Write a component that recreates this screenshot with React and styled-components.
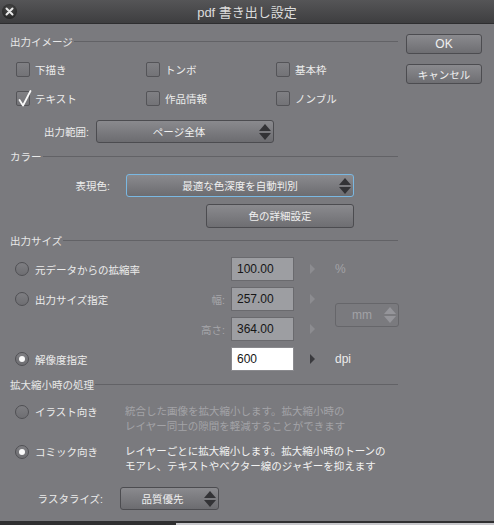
import React from 'react'
import styled, { createGlobalStyle, css } from 'styled-components'

const FONT = `"Liberation Sans", "Noto Sans CJK JP", sans-serif`

const GlobalStyle = createGlobalStyle`
  html, body {
    margin: 0;
    padding: 0;
    background: #7a7a7e;
  }
  body {
    font-family: ${FONT};
    font-size: 10.5px;
    color: #ececec;
  }
`

const Window = styled.div`
  width: 494px;
  height: 525px;
  display: flex;
  flex-direction: column;
  overflow: hidden;
  background: #7a7a7e;
`

const TitleBar = styled.div`
  height: 24px;
  flex: none;
  display: grid;
  grid-template-columns: 20px 1fr 20px;
  align-items: center;
  background: linear-gradient(#555557, #3e3e40);
  border-bottom: 1px solid #2e2e30;
  box-sizing: border-box;
`

const CloseButton = styled.div`
  width: 15px;
  height: 15px;
  margin-left: 2px;
  border-radius: 50%;
  background: radial-gradient(circle at 50% 35%, #4a4a4a, #1c1c1c);
  display: flex;
  align-items: center;
  justify-content: center;
`

const Title = styled.div`
  text-align: center;
  font-size: 13px;
  color: #dcdcdc;
`

const Body = styled.div`
  flex: 1;
  display: flex;
  gap: 8px;
  padding: 0 12px 0 10px;
`

const Main = styled.div`
  width: 388px;
  display: flex;
  flex-direction: column;
`

const Side = styled.div`
  width: 76px;
  padding-top: 10px;
  display: flex;
  flex-direction: column;
  gap: 10px;
`

const SectionHead = styled.div`
  height: 16px;
  margin-top: ${p => p.$mt}px;
  display: flex;
  align-items: center;
  gap: 1px;
  color: #e8e8e8;

  &::after {
    content: '';
    flex: 1;
    height: 1px;
    background: #626266;
  }
`

const CheckGrid = styled.div`
  margin-top: 6px;
  padding-left: 6px;
  display: grid;
  grid-template-columns: 130px 130px 130px;
  grid-auto-rows: 29px;
`

const CheckItem = styled.label`
  display: flex;
  align-items: center;
  gap: 5px;
`

const Box = styled.span`
  position: relative;
  width: 14px;
  height: 15px;
  box-sizing: border-box;
  border: 1px solid #545458;
  border-radius: 2px;
  background: linear-gradient(#808084, #737377);

  svg {
    position: absolute;
    left: 0px;
    top: -3px;
  }
`

const Row = styled.div`
  height: ${p => p.$h || 23}px;
  margin-top: ${p => p.$mt}px;
  display: flex;
  align-items: center;
  gap: ${p => p.$gap || 7}px;
  padding-left: ${p => p.$pl || 0}px;
`

const FieldLabel = styled.span`
  width: ${p => p.$w}px;
  text-align: right;
  flex: none;
`

const SelectBox = styled.div`
  position: relative;
  width: ${p => p.$w}px;
  height: ${p => p.$h || 23}px;
  box-sizing: border-box;
  border: 1px solid ${p => (p.$focus ? '#7ab8e2' : '#4c4c50')};
  border-radius: 3px;
  background: ${p => (p.$disabled ? '#7a7a7e' : 'linear-gradient(#8a8a8e, #6c6c70)')};
  color: ${p => (p.$disabled ? '#a2a2a6' : '#f0f0f0')};
  display: flex;
  align-items: center;
  justify-content: center;
  padding-right: ${p => p.$pr || 0}px;
  flex: none;
  ${p => p.$disabled && css`
    border-color: #66666a;
  `}
`

const Stepper = styled.span`
  position: absolute;
  right: 2px;
  top: 50%;
  transform: translateY(-50%);
  display: flex;
  flex-direction: column;
  gap: 2px;

  &::before, &::after {
    content: '';
    width: 0;
    height: 0;
    border-left: 6px solid transparent;
    border-right: 6px solid transparent;
  }
  &::before {
    border-bottom: 7px solid ${p => (p.$disabled ? '#95959a' : '#333336')};
  }
  &::after {
    border-top: 7px solid ${p => (p.$disabled ? '#95959a' : '#333336')};
  }
`

const Button = styled.button`
  width: ${p => p.$w || 76}px;
  height: ${p => p.$h || 20}px;
  margin-top: ${p => p.$mt || 0}px;
  margin-left: ${p => p.$ml || 0}px;
  box-sizing: border-box;
  border: 1px solid #4c4c50;
  border-radius: 3px;
  background: linear-gradient(#8a8a8e, #6e6e72);
  color: #f0f0f0;
  font-family: ${FONT};
  font-size: ${p => p.$fs || 10.5}px;
  padding: 0;
  flex: none;
`

const SizeGrid = styled.div`
  margin-top: 9px;
  padding-left: 5px;
  display: grid;
  grid-template-columns: 210px 63px 29px 64px;
  grid-auto-rows: 24px;
  row-gap: 6px;
  column-gap: 6px;
  align-items: center;
`

const RadioLabel = styled.label`
  display: flex;
  align-items: center;
  gap: 6px;
  color: ${p => (p.$dim ? '#a6a6aa' : '#ececec')};
  justify-content: ${p => (p.$right ? 'flex-end' : 'flex-start')};
  height: 100%;
`

const SmallLabel = styled.span`
  margin-left: auto;
  color: #a6a6aa;
`

const Radio = styled.span`
  width: 14px;
  height: 14px;
  box-sizing: border-box;
  border-radius: 50%;
  border: 1px solid #505054;
  background: linear-gradient(#7e7e82, #6e6e72);
  display: flex;
  align-items: center;
  justify-content: center;
  flex: none;

  &::after {
    content: '';
    display: ${p => (p.$on ? 'block' : 'none')};
    width: 6px;
    height: 6px;
    border-radius: 50%;
    background: #fafafa;
  }
`

const Input = styled.div`
  height: 24px;
  box-sizing: border-box;
  border: 1px solid ${p => (p.$active ? '#8a8a8e' : '#6a6a6e')};
  background: ${p => (p.$active ? '#ffffff' : '#9d9ea2')};
  color: #161616;
  padding-left: 5px;
  display: flex;
  align-items: center;
  font-size: 12px;
`

const Arrow = styled.span`
  justify-self: start;
  margin-left: 10px;
  width: 0;
  height: 0;
  border-top: 5px solid transparent;
  border-bottom: 5px solid transparent;
  border-left: 5px solid ${p => (p.$active ? '#3a3a3e' : '#8c8c90')};
`

const Unit = styled.span`
  color: ${p => (p.$dim ? '#a2a2a6' : '#ececec')};
  font-size: 12px;
`

const UnitSelect = styled(SelectBox)`
  grid-column: 4;
  grid-row: 2 / 4;
  align-self: center;
  margin-top: 1px;
  font-size: 12px;
`

const ModeRow = styled.div`
  margin-top: ${p => p.$mt}px;
  padding-left: 5px;
  display: flex;
  align-items: flex-start;
`

const ModeLabel = styled.label`
  width: 110px;
  display: flex;
  align-items: center;
  gap: 6px;
  height: 15px;
`

const ModeText = styled.p`
  margin: 0;
  line-height: 15px;
  white-space: nowrap;
  color: ${p => (p.$dim ? '#a3a3a7' : '#f2f2f2')};
`

const BottomEdge = styled.div`
  height: 4px;
  flex: none;
  display: flex;
  flex-direction: column;
  background: #2f2f31;

  &::after {
    content: '';
    margin-top: 2px;
    margin-left: 176px;
    height: 2px;
    background: #c8c8cc;
  }
`

function Check({ label, checked }) {
  return (
    <CheckItem>
      <Box>
        {checked && (
          <svg width="16" height="19" viewBox="0 0 16 19">
            <path d="M2.5 11 L6 16.5 L13.5 2" fill="none" stroke="#f8f8f8" strokeWidth="1.8" strokeLinecap="round" strokeLinejoin="round" />
          </svg>
        )}
      </Box>
      {label}
    </CheckItem>
  )
}

function Select({ children, ...props }) {
  return (
    <SelectBox {...props}>
      {children}
      <Stepper $disabled={props.$disabled} />
    </SelectBox>
  )
}

export default function App() {
  return (
    <>
      <GlobalStyle />
      <Window>
        <TitleBar>
          <CloseButton>
            <svg width="9" height="9" viewBox="0 0 9 9">
              <path d="M1.5 1.5 L7.5 7.5 M7.5 1.5 L1.5 7.5" stroke="#e8e8e8" strokeWidth="2" strokeLinecap="round" />
            </svg>
          </CloseButton>
          <Title>pdf 書き出し設定</Title>
          <span />
        </TitleBar>
        <Body>
          <Main>
            <SectionHead $mt={9}>出力イメージ</SectionHead>
            <CheckGrid>
              <Check label="下描き" />
              <Check label="トンボ" />
              <Check label="基本枠" />
              <Check label="テキスト" checked />
              <Check label="作品情報" />
              <Check label="ノンブル" />
            </CheckGrid>
            <Row $mt={7}>
              <FieldLabel $w={79}>出力範囲:</FieldLabel>
              <Select $w={178} $pr={12}>ページ全体</Select>
            </Row>

            <SectionHead $mt={5}>カラー</SectionHead>
            <Row $mt={10} $gap={16}>
              <FieldLabel $w={100}>表現色:</FieldLabel>
              <Select $w={228} $focus>最適な色深度を自動判別</Select>
            </Row>
            <Row $mt={7}>
              <Button $w={148} $h={24} $ml={196}>色の詳細設定</Button>
            </Row>

            <SectionHead $mt={5}>出力サイズ</SectionHead>
            <SizeGrid>
              <RadioLabel><Radio />元データからの拡縮率</RadioLabel>
              <Input>100.00</Input>
              <Arrow />
              <Unit $dim>%</Unit>

              <RadioLabel>
                <Radio />出力サイズ指定
                <SmallLabel>幅:</SmallLabel>
              </RadioLabel>
              <Input>257.00</Input>
              <Arrow />
              <UnitSelect $w={64} $h={24} $disabled $pr={10}>
                mm
                <Stepper $disabled />
              </UnitSelect>

              <RadioLabel $right $dim>高さ:</RadioLabel>
              <Input>364.00</Input>
              <Arrow />

              <RadioLabel><Radio $on />解像度指定</RadioLabel>
              <Input $active>600</Input>
              <Arrow $active />
              <Unit>dpi</Unit>
            </SizeGrid>

            <SectionHead $mt={5}>拡大縮小時の処理</SectionHead>
            <ModeRow $mt={12}>
              <ModeLabel><Radio />イラスト向き</ModeLabel>
              <ModeText $dim>
                統合した画像を拡大縮小します。拡大縮小時の<br />
                レイヤー同士の隙間を軽減することができます
              </ModeText>
            </ModeRow>
            <ModeRow $mt={10}>
              <ModeLabel><Radio $on />コミック向き</ModeLabel>
              <ModeText>
                レイヤーごとに拡大縮小します。拡大縮小時のトーンの<br />
                モアレ、テキストやベクター線のジャギーを抑えます
              </ModeText>
            </ModeRow>
            <Row $mt={13} $gap={17}>
              <FieldLabel $w={93}>ラスタライズ:</FieldLabel>
              <Select $w={99} $pr={14}>品質優先</Select>
            </Row>
          </Main>
          <Side>
            <Button $fs={12}>OK</Button>
            <Button>キャンセル</Button>
          </Side>
        </Body>
        <BottomEdge />
      </Window>
    </>
  )
}
